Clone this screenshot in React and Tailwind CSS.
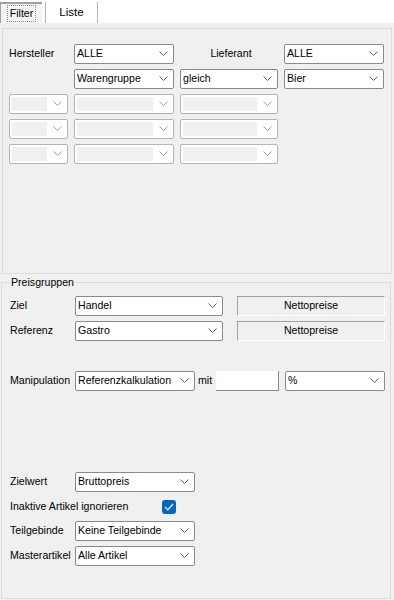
import React from 'react';

function Chevron({ light }) {
  return (
    <svg width="9" height="6" viewBox="0 0 9 6" className="shrink-0">
      <polyline points="0.5,0.5 4.5,4.5 8.5,0.5" fill="none" stroke={light ? '#a0a0a0' : '#606060'} strokeWidth="1" />
    </svg>
  );
}

function Combo({ value, w }) {
  return (
    <div className={`${w} h-[20px] bg-white border border-[#8a8a8a] rounded-[2px] flex items-center pl-[2px] pr-[5px] shrink-0`}>
      <span className="flex-1 truncate leading-none pb-[1px]">{value}</span>
      <Chevron />
    </div>
  );
}

function DisabledCombo({ w }) {
  return (
    <div className={`${w} h-[20px] bg-white border border-[#b4b4b4] rounded-[2px] flex items-center pl-[2px] pr-[5px] shrink-0`}>
      <div className="flex-1 h-[14px] bg-[#f0f0f0] mr-[6px]" />
      <Chevron light />
    </div>
  );
}

function Sunken({ text }) {
  return (
    <div className="w-[148px] h-[20px] bg-[#f0f0f0] border border-t-[#a0a0a0] border-l-[#a0a0a0] border-b-white border-r-white flex items-center justify-center shrink-0">
      {text}
    </div>
  );
}

function Label({ children, w = 'w-[65px]' }) {
  return <span className={`${w} shrink-0 whitespace-nowrap`}>{children}</span>;
}

export default function App() {
  return (
    <div className="w-[394px] h-[600px] bg-[#f0f0f0] text-[10.6px] text-black font-['Liberation_Sans',Arial,sans-serif] flex flex-col overflow-hidden">
      {/* Tab strip */}
      <div className="h-[23px] bg-white flex items-end shrink-0">
        <div className="w-[42px] h-[21px] border-t-2 border-l border-[#a0a0a0] bg-[#f4f4f4] flex items-center justify-center">
          <span className="px-[2px] border border-dotted border-[#888]">Filter</span>
        </div>
        <div className="w-[3px]" />
        <div className="w-[53px] h-[21px] border-l border-r border-[#b4b4b4] flex items-center justify-center text-[11.5px]">
          Liste
        </div>
      </div>

      {/* Filter panel */}
      <div className="mx-[2px] mt-[5px] h-[246px] border border-[#dcdcdc] pt-[15px] pl-[6px] shrink-0">
        <div className="grid grid-cols-[59px_100px_98px_100px] gap-x-[6px] gap-y-[5px]">
          <div className="h-[20px] flex items-center">Hersteller</div>
          <Combo value="ALLE" w="w-[100px]" />
          <div className="h-[20px] flex items-center justify-center pl-[4px]">Lieferant</div>
          <Combo value="ALLE" w="w-[100px]" />

          <div />
          <Combo value="Warengruppe" w="w-[100px]" />
          <Combo value="gleich" w="w-[98px]" />
          <Combo value="Bier" w="w-[100px]" />

          <DisabledCombo w="w-[59px]" />
          <DisabledCombo w="w-[100px]" />
          <DisabledCombo w="w-[98px]" />
          <div />

          <DisabledCombo w="w-[59px]" />
          <DisabledCombo w="w-[100px]" />
          <DisabledCombo w="w-[98px]" />
          <div />

          <DisabledCombo w="w-[59px]" />
          <DisabledCombo w="w-[100px]" />
          <DisabledCombo w="w-[98px]" />
          <div />
        </div>
      </div>

      {/* Preisgruppen */}
      <div className="relative ml-[1px] mr-[3px] mt-[8px] h-[317px] border border-[#dcdcdc] pl-[8px] pt-[13px] shrink-0">
        <span className="absolute left-[8px] top-[-8px] bg-[#f0f0f0] px-[1px] leading-[14px]">Preisgruppen</span>

        <div className="flex items-center h-[20px]">
          <Label>Ziel</Label>
          <Combo value="Handel" w="w-[148px]" />
          <div className="w-[14px]" />
          <Sunken text="Nettopreise" />
        </div>
        <div className="flex items-center h-[20px] mt-[5px]">
          <Label>Referenz</Label>
          <Combo value="Gastro" w="w-[148px]" />
          <div className="w-[14px]" />
          <Sunken text="Nettopreise" />
        </div>

        <div className="flex items-center h-[20px] mt-[30px]">
          <Label>Manipulation</Label>
          <Combo value="Referenzkalkulation" w="w-[120px]" />
          <span className="w-[21px] pl-[3px]">mit</span>
          <div className="w-[63px] h-[20px] bg-white border-b border-r border-[#8a8a8a]" />
          <div className="w-[6px]" />
          <Combo value="%" w="w-[100px]" />
        </div>

        <div className="flex items-center h-[20px] mt-[81px]">
          <Label>Zielwert</Label>
          <Combo value="Bruttopreis" w="w-[120px]" />
        </div>

        <div className="flex items-center h-[14px] mt-[8px]">
          <Label w="w-[152px]">Inaktive Artikel ignorieren</Label>
          <div className="w-[14px] h-[14px] rounded-[3px] bg-[#0067c0] flex items-center justify-center">
            <svg width="10" height="8" viewBox="0 0 10 8">
              <polyline points="1,4 3.8,6.8 9,1" fill="none" stroke="white" strokeWidth="1.2" />
            </svg>
          </div>
        </div>

        <div className="flex items-center h-[20px] mt-[7px]">
          <Label>Teilgebinde</Label>
          <Combo value="Keine Teilgebinde" w="w-[120px]" />
        </div>
        <div className="flex items-center h-[20px] mt-[5px]">
          <Label>Masterartikel</Label>
          <Combo value="Alle Artikel" w="w-[120px]" />
        </div>
      </div>
    </div>
  );
}
